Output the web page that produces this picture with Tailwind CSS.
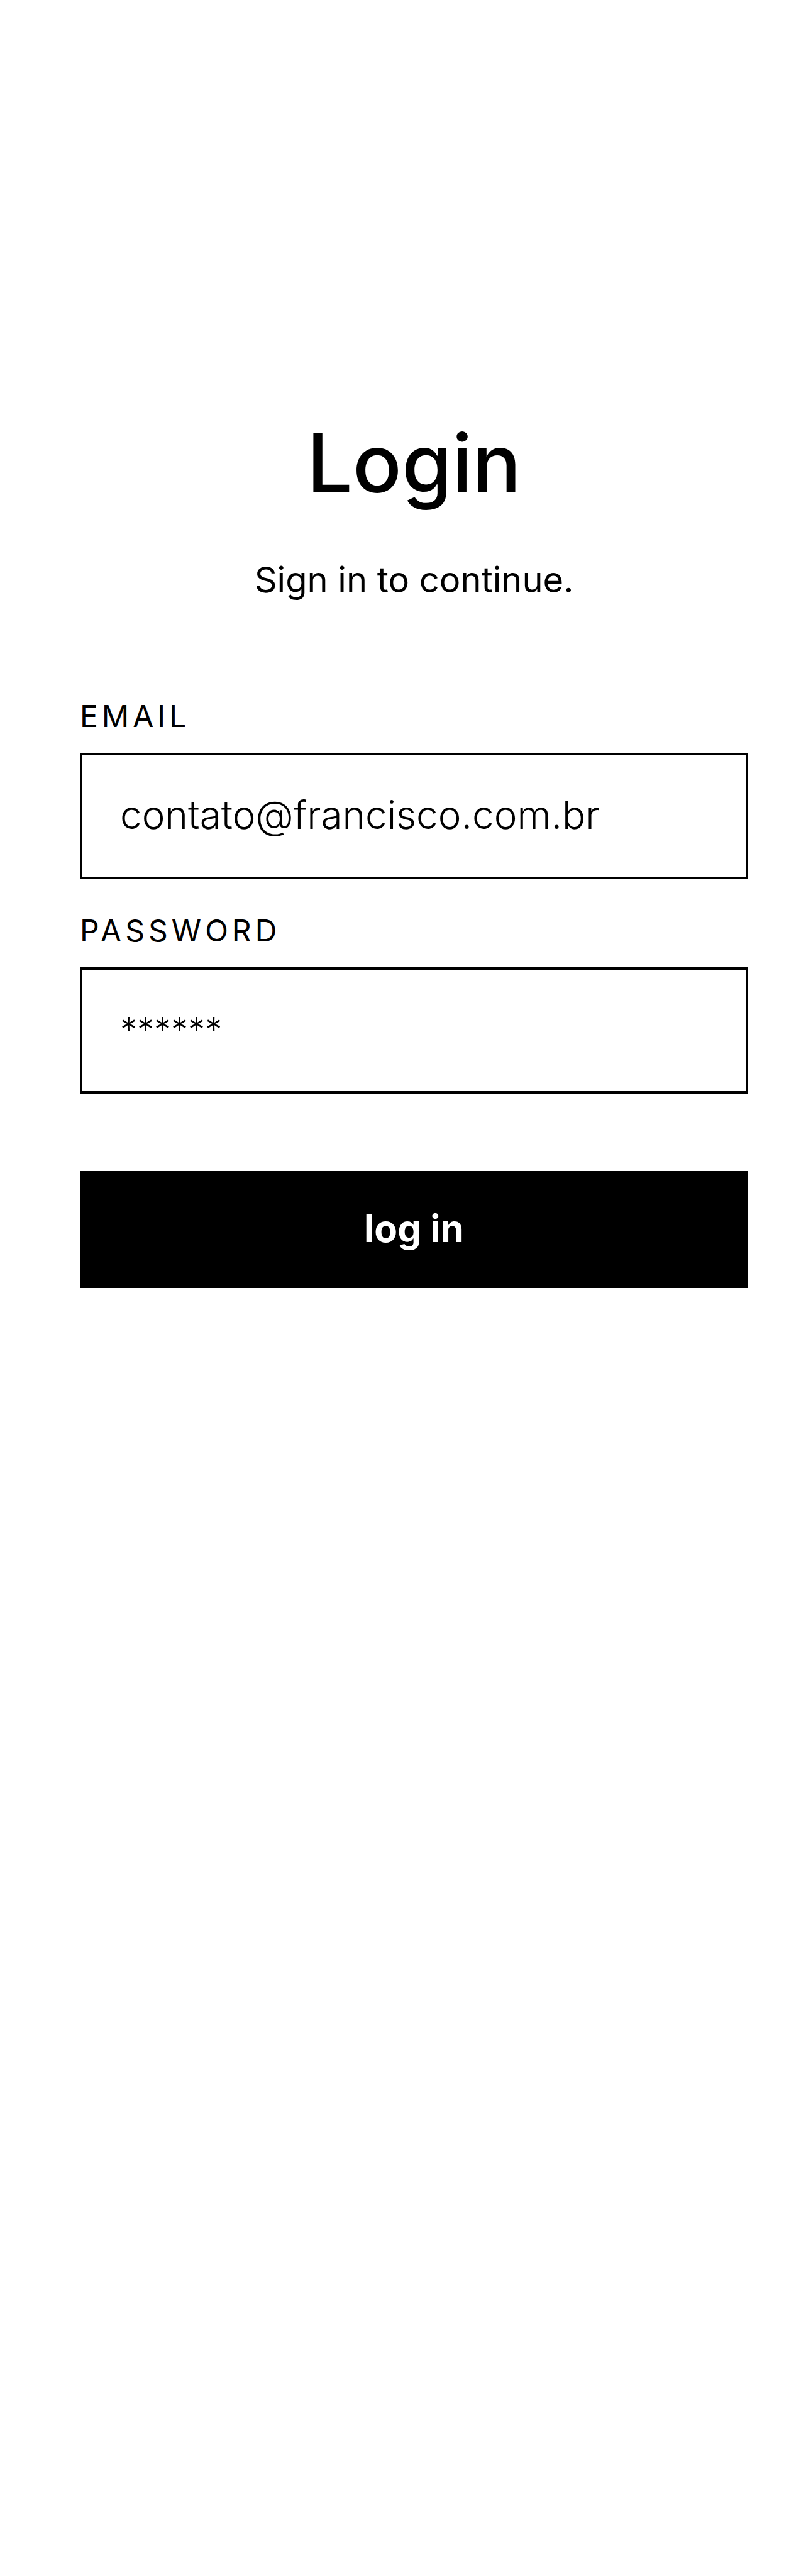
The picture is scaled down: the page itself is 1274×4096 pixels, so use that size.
<!DOCTYPE html>
<html lang="en">
<head>
<meta charset="utf-8">
<meta name="viewport" content="width=device-width, initial-scale=1">
<title>Login</title>
<script src="https://cdn.jsdelivr.net/npm/@tailwindcss/browser@4"></script>
</head>
<body class="min-h-screen bg-white font-['Inter',sans-serif] text-black">
<main class="pt-[656px] pr-[84px] pl-[127px]">
  <header class="text-center">
    <h1 class="text-[129px] leading-[160px] font-medium">Login</h1>
    <p class="mt-[66px] text-[56px] leading-[80px]">Sign in to continue.</p>
  </header>
  <form class="mt-[145px] flex flex-col">
    <div class="flex flex-col gap-[26px]">
      <label for="email" class="text-[48px] leading-[64px] tracking-[6px]">EMAIL</label>
      <input id="email" type="email" value="contato@francisco.com.br" class="h-[201px] w-full border-4 border-black bg-white px-[60px] pb-1 text-[62px] font-light outline-none">
    </div>
    <div class="mt-[50px] flex flex-col gap-[26px]">
      <label for="password" class="text-[48px] leading-[64px] tracking-[6px]">PASSWORD</label>
      <input id="password" type="password" placeholder="******" class="h-[201px] w-full border-4 border-black bg-white px-[60px] pb-1 text-[54px] font-light outline-none placeholder:text-black">
    </div>
    <button type="submit" class="mt-[123px] h-[186px] w-full bg-black pb-1 text-[60px] font-bold text-white">log in</button>
  </form>
</main>
</body>
</html>
